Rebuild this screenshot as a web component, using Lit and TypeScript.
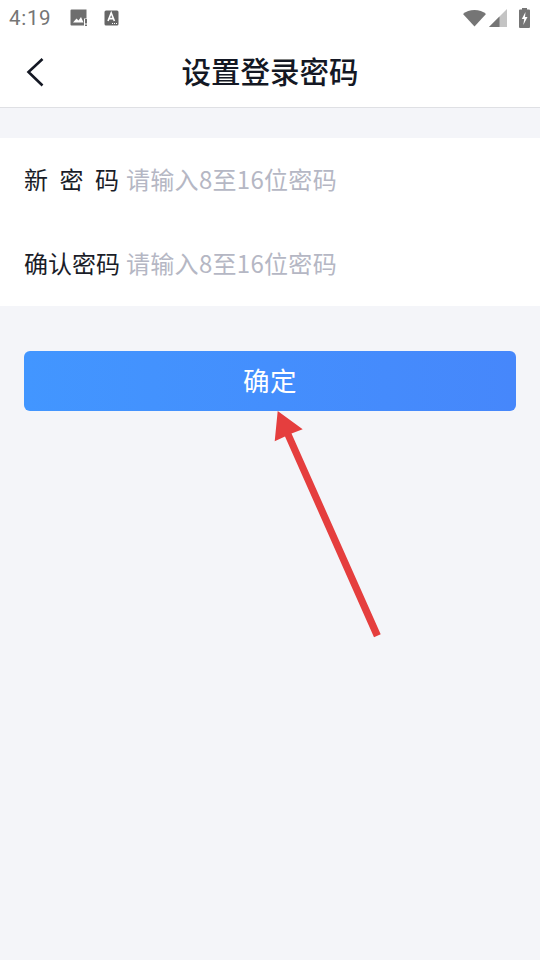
import { LitElement, html, css, svg } from "lit";
import { customElement } from "lit/decorators.js";

@customElement("app-root")
export class AppRoot extends LitElement {
  static styles = css`
    :host {
      display: flex;
      flex-direction: column;
      position: relative;
      width: 540px;
      height: 960px;
      overflow: hidden;
      background: #f4f5f9;
      font-family: "Noto Sans CJK SC", "Noto Sans", sans-serif;
    }
    .status {
      height: 36px;
      background: #fff;
      display: flex;
      align-items: center;
      padding: 0 10px 0 9px;
      color: #757575;
    }
    .time {
      font-family: Roboto, sans-serif;
      font-size: 20.5px;
      line-height: 36px;
      width: 60px;
      letter-spacing: 0.7px;
    }
    .status svg { display: block; }
    .note1 { margin-left: 1px; margin-right: 16px; }
    .spacer { flex: 1; }
    .right { display: flex; align-items: center; }
    .wifi { margin-right: 3px; }
    .signal { margin-right: 12px; }
    .nav {
      height: 71px;
      background: #fff;
      border-bottom: 1px solid #dfe0e4;
      display: flex;
      align-items: center;
      justify-content: center;
      position: relative;
    }
    .back { position: absolute; left: 26px; top: 21px; }
    .title {
      font-size: 29.5px;
      font-weight: 500;
      color: #141824;
      line-height: 69px;
      padding-bottom: 2px;
    }
    .form {
      margin-top: 30px;
      background: #fff;
      height: 168px;
      padding: 0 24px;
      display: flex;
      flex-direction: column;
    }
    .row {
      height: 84px;
      box-sizing: border-box;
      padding-bottom: 2px;
      display: flex;
      align-items: center;
      font-size: 24px;
      line-height: 82px;
    }
    .label {
      width: 95px;
      margin-right: 8px;
      color: #1a1d28;
      display: flex;
      justify-content: space-between;
      white-space: nowrap;
    }
    .ph {
      color: #b5b7c4;
      white-space: nowrap;
      margin-left: -1px;
      letter-spacing: 0.3px;
    }
    .btn {
      margin: 45px 24px 0;
      height: 60px;
      box-sizing: border-box;
      padding-bottom: 4px;
      border-radius: 6px;
      background: linear-gradient(90deg, #4296ff, #4687fb);
      color: #fff;
      font-size: 26.5px;
      display: flex;
      align-items: center;
      justify-content: center;
      letter-spacing: 0.5px;
    }
    .arrow { position: absolute; left: 0; top: 0; pointer-events: none; }
  `;

  render() {
    return html`
      <div class="status">
        <span class="time">4:19</span>
        <svg class="note1" width="18" height="18" viewBox="0 0 18 18">
          <path fill="#6e6e6e" d="M1.500 0.500h15v9h-2.500v7H1.500a1 1 0 0 1-1-1V1.500a1 1 0 0 1 1-1z"/>
          <path fill="#fff" d="M3 13.500l3.500-4 2 2 2.500-3.500 2.500 5.500z"/>
          <path fill="#6e6e6e" d="M15 10h2v4.500h-2zM15 15.500h2v1.500h-2z"/>
        </svg>
        <svg width="15" height="16" viewBox="0 0 15 16">
          <rect x="0.500" y="0.500" width="14" height="15" rx="1.500" fill="#666"/>
          <path fill="none" stroke="#fff" stroke-width="1.600" d="M4 11l3.200-8 3.200 8M5 8.600h4.600"/>
          <path fill="#fff" d="M8 13h1v1H8zM10 13h1v1h-1zM12 13h1v1h-1z"/>
        </svg>
        <span class="spacer"></span>
        <div class="right">
          <svg class="wifi" width="23" height="18" viewBox="0 0 23 18">
            <path fill="#757575" d="M0 5C3 2.200 7 1 11.500 1S20 2.200 23 5L11.500 17.500z"/>
          </svg>
          <svg class="signal" width="18" height="18" viewBox="0 0 18 18">
            <path fill="#c4c4c4" d="M18 0v18H0z"/>
            <path fill="#757575" d="M10.500 7.500V18H0z"/>
          </svg>
          <svg width="11" height="20" viewBox="0 0 11 20">
            <path fill="#757575" d="M3 1.500V0h5v1.500h2a1 1 0 0 1 1 1V19a1 1 0 0 1-1 1H1a1 1 0 0 1-1-1V2.500a1 1 0 0 1 1-1z"/>
            <path fill="#fff" d="M6.500 4L2.800 11h2.400L4.300 17 8.500 9H6z"/>
          </svg>
        </div>
      </div>
      <div class="nav">
        <svg class="back" width="20" height="30" viewBox="0 0 20 30">
          <path fill="none" stroke="#141824" stroke-width="2.600" d="M16.500 2L2.500 15l14 13.500"/>
        </svg>
        <span class="title">设置登录密码</span>
      </div>
      <div class="form">
        <div class="row">
          <span class="label"><span>新</span><span>密</span><span>码</span></span>
          <span class="ph">请输入8至16位密码</span>
        </div>
        <div class="row">
          <span class="label">确认密码</span>
          <span class="ph">请输入8至16位密码</span>
        </div>
      </div>
      <div class="btn">确定</div>
      <svg class="arrow" width="540" height="960" viewBox="0 0 540 960">
        ${svg`<path fill="#e53e3e" d="M277.700 411L302.700 429.300L291.500 433.500L380.700 634.200L374 637.200L285 436.500L274.700 441.300z"/>`}
      </svg>
    `;
  }
}
